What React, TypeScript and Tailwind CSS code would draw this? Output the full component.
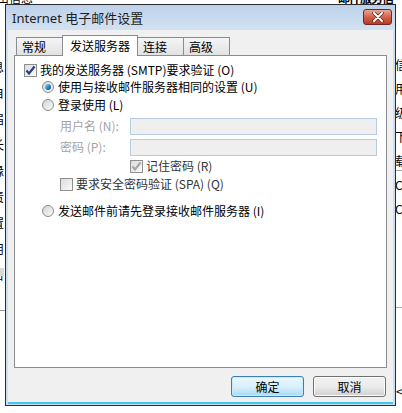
import React from 'react'

const Check = ({ checked, disabled }: { checked?: boolean; disabled?: boolean }) => (
    <span className="w-[13px] h-[13px] shrink-0 border border-[#8e8f8f] bg-gradient-to-br from-[#dcdcdc] to-[#fbfbfb] flex items-center justify-center">
        {checked && (
            <svg width="11" height="11" viewBox="0 0 11 11">
                <path
                    d="M1.5 5.5 L4 8.5 L9.5 1.5"
                    fill="none"
                    stroke={disabled ? '#a8a8a8' : '#2a3f86'}
                    strokeWidth="2.2"
                />
            </svg>
        )}
    </span>
)

const Radio = ({ checked }: { checked?: boolean }) => (
    <span className="w-[12px] h-[12px] shrink-0 rounded-full border border-[#8c8c8c] bg-gradient-to-br from-[#d4d4d4] to-[#fafafa] flex items-center justify-center">
        {checked && <span className="w-[6px] h-[6px] rounded-full bg-gradient-to-br from-[#9be0f7] via-[#2c8ed3] to-[#0b3f7a]" />}
    </span>
)

const Tab = ({ label, active }: { label: string; active?: boolean }) =>
    active ? (
        <div className="h-[21px] px-[7px] -ml-px -mb-px border border-b-0 border-[#898c95] bg-white flex items-center relative z-10">
            {label}
        </div>
    ) : (
        <div className="h-[18px] w-[47px] -ml-px first:ml-0 border border-b-0 border-[#898c95] bg-gradient-to-b from-[#f5f5f5] to-[#e2e2e2] flex items-center pl-[5px]">
            {label}
        </div>
    )

const Backdrop = () => (
    <div className="absolute inset-0 text-[12px] text-black font-['Noto_Sans_CJK_SC',sans-serif] leading-[14px]">
        <div className="absolute left-[-3px] top-[-9px]">由信息</div>
        <div className="absolute left-[338px] top-[-9px] font-bold tracking-[-1px]">邮件服务信息</div>
        <div className="absolute left-[-8px] top-[60px] flex flex-col gap-[12px]">
            <span>息</span>
            <span>自</span>
            <span>届</span>
            <span>长</span>
            <span>缘</span>
            <span>责</span>
            <span>置</span>
            <span>用</span>
            <span>名</span>
        </div>
        <div className="absolute left-[-2px] top-[268px] w-[6px] h-[8px] bg-[#d8d8d8]" />
        <div className="absolute left-[0px] top-[310px] w-[6px] h-px bg-[#999]" />
        <div className="absolute left-[395px] top-[58px] flex flex-col gap-[10px]">
            <span>信</span>
            <span>用</span>
            <span>级</span>
            <span>下</span>
            <span>载</span>
            <span>C</span>
            <span>C</span>
        </div>
        <div className="absolute left-[396px] top-[170px] w-[6px] h-px bg-[#aaa]" />
        <div className="absolute left-[396px] top-[307px] w-[6px] h-px bg-[#aaa]" />
        <div className="absolute left-[396px] top-[384px]">&lt;</div>
    </div>
)

export default function App() {
    return (
        <div className="w-[402px] h-[413px] bg-white relative overflow-hidden font-['Noto_Sans_CJK_SC',sans-serif] text-[12px] leading-[14px] text-black">
            <Backdrop />
            <div className="absolute left-[5px] top-[4px] w-[391px] h-[402px] border border-[#2b2b2b] bg-[#cddff1] flex flex-col">
                <div className="h-[25px] shrink-0 bg-gradient-to-b from-[#bcd1ea] to-[#d3e2f2] flex items-center pl-[6px] pr-[3px]">
                    <span className="font-['Noto_Sans','Noto_Sans_CJK_SC',sans-serif] text-[13px] text-[#1e1e1e] flex-1">
                        Internet 电子邮件设置
                    </span>
                    <div className="w-[29px] h-[16px] mt-[-1px] rounded-[3px] border border-[#6e2a20] bg-gradient-to-b from-[#e9a897] via-[#d2624b] to-[#b83a24] flex items-center justify-center">
                        <svg width="12" height="10" viewBox="0 0 12 10">
                            <path d="M2 1 L10 9 M10 1 L2 9" stroke="#5a2218" strokeWidth="3.4" strokeLinecap="round" />
                            <path d="M2 1 L10 9 M10 1 L2 9" stroke="#ffffff" strokeWidth="2" strokeLinecap="round" />
                        </svg>
                    </div>
                </div>
                <div className="mx-[2px] h-[371px] bg-[#f0f0f0] flex flex-col pl-[6px] pr-[6px] pt-[5px]">
                    <div className="flex items-end pl-[2px] h-[20px]">
                        <Tab label="常规" />
                        <Tab label="发送服务器" active />
                        <Tab label="连接" />
                        <Tab label="高级" />
                    </div>
                    <div className="h-[313px] border border-[#898c95] bg-white flex flex-col pt-[6px]">
                        <div className="h-[16px] flex items-center pl-[9px] gap-[3px]">
                            <Check checked />
                            <span>我的发送服务器 (SMTP)要求验证 (O)</span>
                        </div>
                        <div className="h-[16px] mt-[1px] flex items-center pl-[27px] gap-[4px]">
                            <Radio checked />
                            <span>使用与接收邮件服务器相同的设置 (U)</span>
                        </div>
                        <div className="h-[16px] mt-[2px] flex items-center pl-[27px] gap-[4px]">
                            <Radio />
                            <span>登录使用 (L)</span>
                        </div>
                        <div className="h-[18px] mt-[4px] flex items-center pl-[45px]">
                            <span className="w-[70px] text-[#a3a3a3]">用户名 (N):</span>
                            <div className="w-[247px] h-[17px] border border-[#b4cbe2] bg-[#efefef]" />
                        </div>
                        <div className="h-[18px] mt-[3px] flex items-center pl-[45px]">
                            <span className="w-[70px] text-[#a3a3a3]">密码 (P):</span>
                            <div className="w-[247px] h-[17px] border border-[#b4cbe2] bg-[#efefef]" />
                        </div>
                        <div className="h-[16px] mt-[2px] flex items-center pl-[115px] gap-[3px]">
                            <Check checked disabled />
                            <span className="text-[#333]">记住密码 (R)</span>
                        </div>
                        <div className="h-[16px] mt-[2px] flex items-center pl-[45px] gap-[3px]">
                            <Check />
                            <span className="text-[#333]">要求安全密码验证 (SPA) (Q)</span>
                        </div>
                        <div className="h-[16px] mt-[11px] flex items-center pl-[27px] gap-[4px]">
                            <Radio />
                            <span>发送邮件前请先登录接收邮件服务器 (I)</span>
                        </div>
                    </div>
                    <div className="flex justify-end gap-[9px] mt-[8px] pr-[1px]">
                        <button className="w-[73px] h-[21px] rounded-[3px] border border-[#3c7fb1] bg-gradient-to-b from-[#eaf6fd] via-[#d9f0fc] to-[#a7d9f5] shadow-[inset_0_0_0_1px_#c7ecfb] flex items-center justify-center">
                            确定
                        </button>
                        <button className="w-[73px] h-[21px] rounded-[3px] border border-[#707070] bg-gradient-to-b from-[#f2f2f2] via-[#ebebeb] to-[#cfcfcf] shadow-[inset_0_0_0_1px_#fcfcfc] flex items-center justify-center">
                            取消
                        </button>
                    </div>
                </div>
                <div className="flex-1 mx-[2px] flex flex-col">
                    <div className="h-[1px] bg-[#f0f0f0]" />
                    <div className="h-[2px] bg-[#3fc6ea]" />
                </div>
            </div>
        </div>
    )
}
